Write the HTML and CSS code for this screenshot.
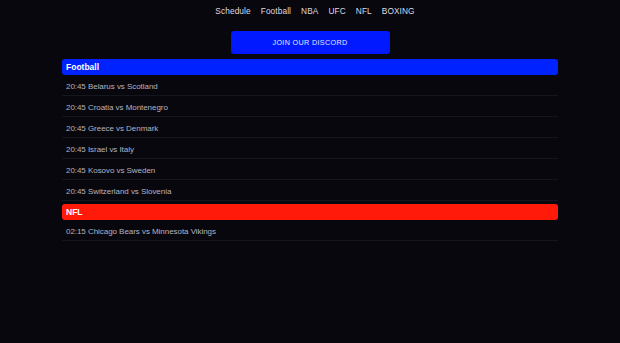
FILE: index.html
```html
<!DOCTYPE html>
<html lang="en">
<head>
    <meta charset="UTF-8">
    <meta name="viewport" content="width=device-width, initial-scale=1.0">
    <title>Schedule</title>
    <link rel="stylesheet" href="styles.css">
</head>
<body>
    <nav class="topnav">
        <a href="#">Schedule</a>
        <a href="#">Football</a>
        <a href="#">NBA</a>
        <a href="#">UFC</a>
        <a href="#">NFL</a>
        <a href="#">BOXING</a>
    </nav>

    <div class="discord">
        <a class="discord-btn" href="#">JOIN OUR DISCORD</a>
    </div>

    <main class="schedule">
        <section class="sport">
            <h2 class="sport-title football">Football</h2>
            <ul class="events">
                <li>20:45 Belarus vs Scotland</li>
                <li>20:45 Croatia vs Montenegro</li>
                <li>20:45 Greece vs Denmark</li>
                <li>20:45 Israel vs Italy</li>
                <li>20:45 Kosovo vs Sweden</li>
                <li>20:45 Switzerland vs Slovenia</li>
            </ul>
        </section>

        <section class="sport">
            <h2 class="sport-title nfl">NFL</h2>
            <ul class="events">
                <li>02:15 Chicago Bears vs Minnesota Vikings</li>
            </ul>
        </section>
    </main>
</body>
</html>
```

FILE: styles.css
```css
body {
    background-color: #07070d;
    font-family: "Liberation Sans", Arial, sans-serif;
    margin: 0;
    padding: 0;
}

.topnav {
    display: flex;
    justify-content: center;
    gap: 10px;
    padding: 6px 0 0 10px;
    height: 25px;
    box-sizing: border-box;
}

.topnav a {
    color: #dcdce6;
    text-decoration: none;
    font-size: 8.3px;
    letter-spacing: 0.1px;
    line-height: 11px;
}

.discord {
    display: flex;
    justify-content: center;
    padding-top: 6px;
}

.discord-btn {
    display: block;
    width: 159px;
    height: 23px;
    line-height: 24px;
    text-align: center;
    background-color: #0019ff;
    color: #e8e8ff;
    font-size: 7.2px;
    letter-spacing: 0.35px;
    text-decoration: none;
    border-radius: 3px;
}

.schedule {
    width: 496px;
    margin: 5px auto 0;
}

.sport {
    margin-bottom: 3px;
}

.sport-title {
    margin: 0;
    height: 16px;
    line-height: 16px;
    padding-left: 4px;
    font-size: 8.5px;
    font-weight: bold;
    color: #fff;
    border-radius: 3px;
}

.football {
    background-color: #0022ff; /* blue band */
}

.nfl {
    background-color: #ff1a0a; /* red band */
}

.events {
    list-style: none;
    margin: 0;
    padding: 0;
}

.events li {
    height: 20px;
    line-height: 23px;
    padding-left: 4px;
    font-size: 8px;
    letter-spacing: -0.05px;
    color: #b4b4c2;
    border-bottom: 1px solid #16161f;
}
```
